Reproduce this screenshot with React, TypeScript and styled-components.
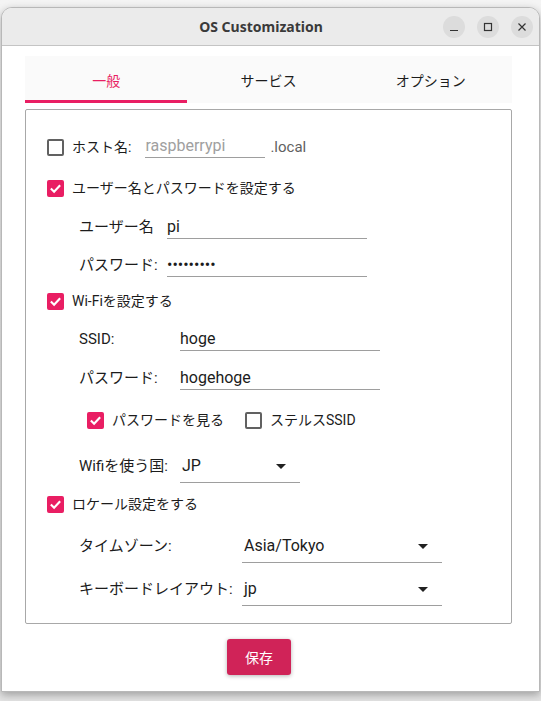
import * as React from 'react'
import styled, { createGlobalStyle } from 'styled-components'

const PINK = '#e91e63'
const TEXT = '#1c1c1c'
const LINE = '#9e9e9e'

const GlobalStyle = createGlobalStyle`
  html, body {
    margin: 0;
    padding: 0;
    background: #ffffff;
  }
  body {
    font-family: Roboto, "Noto Sans CJK JP", sans-serif;
    font-size: 14px;
    color: ${TEXT};
  }
`

// language=SCSS prefix=dummy{ suffix=}
const Desktop = styled.div`
  width: 541px;
  height: 701px;
  padding: 7px 1px 0 1px;
  box-sizing: border-box;
  overflow: hidden;
  background: linear-gradient(#f4f4f4, #e4e4e4);
`

// language=SCSS prefix=dummy{ suffix=}
const Window = styled.div`
  width: 539px;
  height: 685px;
  box-sizing: border-box;
  border: 1px solid #b8b8b8;
  border-radius: 11px 11px 0 0;
  overflow: hidden;
  background: #ffffff;
  box-shadow: 0 3px 8px rgba(0, 0, 0, 0.3);
  display: flex;
  flex-direction: column;
`

// language=SCSS prefix=dummy{ suffix=}
const TitleBar = styled.div`
  height: 37px;
  flex-shrink: 0;
  background: #ebebeb;
  border-bottom: 1px solid #c4c4c4;
  display: flex;
  align-items: center;
  position: relative;
`

// language=SCSS prefix=dummy{ suffix=}
const Title = styled.div`
  flex: 1;
  text-align: center;
  font-family: "Noto Sans", sans-serif;
  font-weight: 700;
  font-size: 14px;
  color: #3a3a3a;
  padding-right: 19px;
`

// language=SCSS prefix=dummy{ suffix=}
const Controls = styled.div`
  position: absolute;
  right: 6px;
  top: 8px;
  display: flex;
  gap: 12px;
`

// language=SCSS prefix=dummy{ suffix=}
const RoundButton = styled.div`
  width: 22px;
  height: 22px;
  border-radius: 11px;
  background: #dcdcdc;
  display: flex;
  align-items: center;
  justify-content: center;
`

// language=SCSS prefix=dummy{ suffix=}
const Body = styled.div`
  flex: 1;
  padding: 10px 27px 0 23px;
  display: flex;
  flex-direction: column;
`

// language=SCSS prefix=dummy{ suffix=}
const TabBar = styled.div`
  height: 47px;
  background: #fafafa;
  display: grid;
  grid-template-columns: repeat(3, 1fr);
`

// language=SCSS prefix=dummy{ suffix=}
const Tab = styled.div<{ $active?: boolean }>`
  display: flex;
  align-items: center;
  justify-content: center;
  padding-top: 3px;
  box-sizing: border-box;
  font-size: 14px;
  color: ${p => (p.$active ? PINK : TEXT)};
  border-bottom: 3px solid ${p => (p.$active ? PINK : 'transparent')};
`

// language=SCSS prefix=dummy{ suffix=}
const Panel = styled.div`
  margin-top: 6px;
  height: 515px;
  box-sizing: border-box;
  border: 1px solid #a8a8a8;
  border-radius: 2px;
  padding: 26px 0 0 21px;
  display: flex;
  flex-direction: column;
`

// language=SCSS prefix=dummy{ suffix=}
const Row = styled.div<{ $mt?: number; $indent?: number }>`
  display: flex;
  align-items: center;
  margin-top: ${p => p.$mt || 0}px;
  padding-left: ${p => p.$indent || 0}px;
`

// language=SCSS prefix=dummy{ suffix=}
const FieldRow = styled.div<{ $mt?: number }>`
  display: flex;
  align-items: flex-start;
  margin-top: ${p => p.$mt || 0}px;
  padding-left: 32px;
`

// language=SCSS prefix=dummy{ suffix=}
const Box = styled.div<{ $checked?: boolean }>`
  width: 17px;
  height: 17px;
  box-sizing: border-box;
  border-radius: 2px;
  border: 2px solid ${p => (p.$checked ? PINK : '#616161')};
  background: ${p => (p.$checked ? PINK : 'transparent')};
  display: flex;
  align-items: center;
  justify-content: center;
  flex-shrink: 0;
`

// language=SCSS prefix=dummy{ suffix=}
const CheckLabel = styled.span`
  margin-left: 8px;
  line-height: 20px;
`

// language=SCSS prefix=dummy{ suffix=}
const FieldLabel = styled.span<{ $width: number }>`
  width: ${p => p.$width}px;
  font-size: 15px;
  line-height: 20px;
  flex-shrink: 0;
  white-space: nowrap;
`

// language=SCSS prefix=dummy{ suffix=}
const Spacer = styled.span<{ $width: number }>`
  width: ${p => p.$width}px;
  flex-shrink: 0;
`

// language=SCSS prefix=dummy{ suffix=}
const Input = styled.div<{ $width: number; $placeholder?: boolean }>`
  width: ${p => p.$width}px;
  font-size: 16px;
  line-height: 20px;
  padding: 0 2px 1px 0;
  box-sizing: border-box;
  border-bottom: 1px solid ${LINE};
  color: ${p => (p.$placeholder ? '#a0a0a0' : TEXT)};
`

// language=SCSS prefix=dummy{ suffix=}
const Combo = styled.div<{ $width: number }>`
  width: ${p => p.$width}px;
  font-size: 16px;
  line-height: 20px;
  padding: 0 14px 6px 2px;
  box-sizing: border-box;
  border-bottom: 1px solid ${LINE};
  display: flex;
  align-items: center;
  justify-content: space-between;
`

// language=SCSS prefix=dummy{ suffix=}
const Arrow = styled.span`
  width: 0;
  height: 0;
  border-left: 5px solid transparent;
  border-right: 5px solid transparent;
  border-top: 5px solid #212121;
`

// language=SCSS prefix=dummy{ suffix=}
const Suffix = styled.span`
  margin-left: 5px;
  font-size: 15px;
  color: #616161;
`

// language=SCSS prefix=dummy{ suffix=}
const Footer = styled.div`
  display: flex;
  justify-content: center;
  padding-top: 15px;
  padding-right: 19px;
`

// language=SCSS prefix=dummy{ suffix=}
const SaveButton = styled.div`
  width: 64px;
  height: 36px;
  border-radius: 3px;
  background: #d02358;
  color: #ffffff;
  display: flex;
  align-items: center;
  justify-content: center;
  font-size: 14px;
  box-shadow: 0 1px 4px rgba(0, 0, 0, 0.3);
`

const Check = ({ checked }: { checked?: boolean }) => (
  <Box $checked={checked}>
    {checked ? (
      <svg width="13" height="13" viewBox="0 0 14 14">
        <polyline points="2,7 5.5,10.5 12,3.5" fill="none" stroke="#fff" strokeWidth="2.3" />
      </svg>
    ) : null}
  </Box>
)

export default function App() {
  return (
    <>
      <GlobalStyle />
      <Desktop>
        <Window>
          <TitleBar>
            <Title>OS Customization</Title>
            <Controls>
              <RoundButton>
                <svg width="12" height="12" viewBox="0 0 12 12">
                  <line x1="2" y1="9.5" x2="10" y2="9.5" stroke="#333" strokeWidth="1.2" />
                </svg>
              </RoundButton>
              <RoundButton>
                <svg width="12" height="12" viewBox="0 0 12 12">
                  <rect x="2.5" y="2.5" width="7" height="7" fill="none" stroke="#333" strokeWidth="1.2" />
                </svg>
              </RoundButton>
              <RoundButton>
                <svg width="12" height="12" viewBox="0 0 12 12">
                  <path d="M2.5 2.5 L9.5 9.5 M9.5 2.5 L2.5 9.5" stroke="#333" strokeWidth="1.2" />
                </svg>
              </RoundButton>
            </Controls>
          </TitleBar>
          <Body>
            <TabBar>
              <Tab $active>一般</Tab>
              <Tab>サービス</Tab>
              <Tab>オプション</Tab>
            </TabBar>
            <Panel>
              <Row>
                <Check />
                <CheckLabel>ホスト名:</CheckLabel>
                <Spacer $width={14} />
                <Input $width={120} $placeholder>raspberrypi</Input>
                <Suffix>.local</Suffix>
              </Row>
              <Row $mt={20}>
                <Check checked />
                <CheckLabel>ユーザー名とパスワードを設定する</CheckLabel>
              </Row>
              <FieldRow $mt={19}>
                <FieldLabel $width={88}>ユーザー名</FieldLabel>
                <Input $width={200}>pi</Input>
              </FieldRow>
              <FieldRow $mt={16}>
                <FieldLabel $width={88}>パスワード:</FieldLabel>
                <Input $width={200}>•••••••••</Input>
              </FieldRow>
              <Row $mt={14}>
                <Check checked />
                <CheckLabel>Wi-Fiを設定する</CheckLabel>
              </Row>
              <FieldRow $mt={18}>
                <FieldLabel $width={101}>SSID:</FieldLabel>
                <Input $width={200}>hoge</Input>
              </FieldRow>
              <FieldRow $mt={17}>
                <FieldLabel $width={101}>パスワード:</FieldLabel>
                <Input $width={200}>hogehoge</Input>
              </FieldRow>
              <Row $mt={20} $indent={40}>
                <Check checked />
                <CheckLabel>パスワードを見る</CheckLabel>
                <Spacer $width={21} />
                <Check />
                <CheckLabel>ステルスSSID</CheckLabel>
              </Row>
              <FieldRow $mt={26}>
                <FieldLabel $width={101}>Wifiを使う国:</FieldLabel>
                <Combo $width={120}>
                  <span>JP</span>
                  <Arrow />
                </Combo>
              </FieldRow>
              <Row $mt={11}>
                <Check checked />
                <CheckLabel>ロケール設定をする</CheckLabel>
              </Row>
              <FieldRow $mt={22}>
                <FieldLabel $width={163}>タイムゾーン:</FieldLabel>
                <Combo $width={200}>
                  <span>Asia/Tokyo</span>
                  <Arrow />
                </Combo>
              </FieldRow>
              <FieldRow $mt={16}>
                <FieldLabel $width={163}>キーボードレイアウト:</FieldLabel>
                <Combo $width={200}>
                  <span>jp</span>
                  <Arrow />
                </Combo>
              </FieldRow>
            </Panel>
            <Footer>
              <SaveButton>保存</SaveButton>
            </Footer>
          </Body>
        </Window>
      </Desktop>
    </>
  )
}
